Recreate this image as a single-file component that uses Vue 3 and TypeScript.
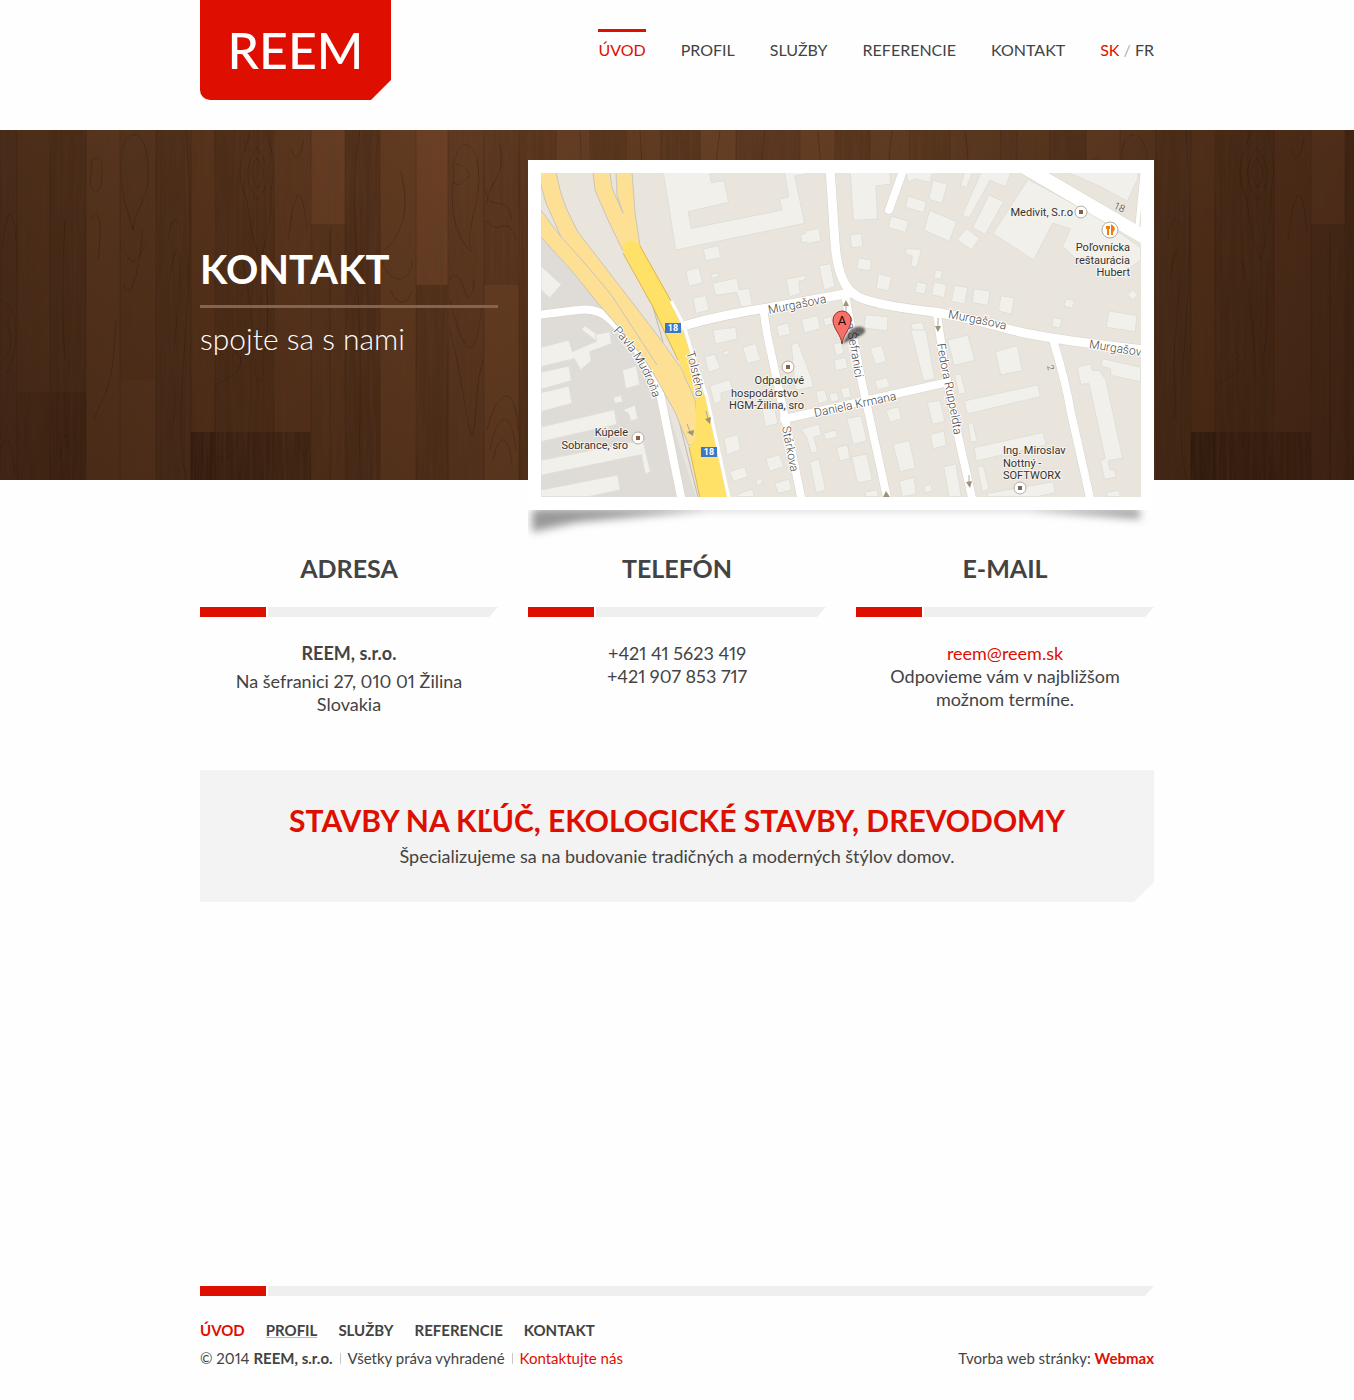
<script setup lang="ts">
interface NavItem {
  label: string
  href: string
}

interface ShapeGroup {
  x: number
  y: number
  shapes: string[]
}

interface Place {
  lines: string[]
  x: number
  y: number
  anchor: 'start' | 'end'
}

const nav: NavItem[] = [
  { label: 'ÚVOD', href: '#uvod' },
  { label: 'PROFIL', href: '#profil' },
  { label: 'SLUŽBY', href: '#sluzby' },
  { label: 'REFERENCIE', href: '#referencie' },
  { label: 'KONTAKT', href: '#kontakt' },
]

// Floor boards of one 1000px tile: [x, y, width, height, colour]
const boards: [number, number, number, number, string][] = [
  [0, 0, 17, 350, '#5a3720'],
  [17, 0, 33, 262, '#5e3a20'], [17, 262, 33, 88, '#56331b'],
  [50, 0, 36, 262, '#57351d'], [50, 262, 36, 88, '#4e2e18'],
  [86, 0, 34, 350, '#673f24'],
  [120, 0, 36, 250, '#603b21'], [120, 250, 36, 100, '#673f24'],
  [156, 0, 35, 350, '#57351d'],
  [191, 0, 24, 302, '#61391e'], [191, 302, 24, 48, '#402513'],
  [215, 0, 59, 302, '#56331b'], [215, 302, 59, 48, '#462915'],
  [274, 0, 37, 302, '#61391f'], [274, 302, 37, 48, '#4c2c17'],
  [311, 0, 34, 94, '#6d4125'], [311, 94, 34, 256, '#5c371e'],
  [345, 0, 35, 350, '#53311b'],
  [380, 0, 36, 350, '#643c21'],
  [416, 0, 32, 155, '#6d4125'], [416, 155, 32, 195, '#57341c'],
  [448, 0, 36, 350, '#5e3820'],
  [484, 0, 35, 155, '#5a361f'], [484, 155, 35, 195, '#683f23'],
  [519, 0, 37, 350, '#58341b'],
  [556, 0, 34, 350, '#633c22'],
  [590, 0, 36, 350, '#57341b'],
  [626, 0, 35, 350, '#603a20'],
  [661, 0, 39, 350, '#57341c'],
  [700, 0, 36, 350, '#653e24'],
  [736, 0, 64, 350, '#5a3620'],
  [800, 0, 35, 350, '#633c22'],
  [835, 0, 35, 350, '#56341c'],
  [870, 0, 40, 350, '#5f3a22'],
  [910, 0, 40, 350, '#58361c'],
  [950, 0, 50, 350, '#5d3920'],
]

// Grain contours within the same tile
const grain: string[] = [
  'M257 18C245 35 244 52 258 70C271 54 270 36 257 18Z',
  'M257 28C250 38 250 47 258 58C265 47 264 38 257 28Z',
  'M250 0C248 20 232 35 245 65C251 82 247 98 261 130C268 98 273 82 271 60C278 30 268 15 268 0',
  'M242 130C250 160 256 220 255 245C260 260 266 245 262 230C273 190 263 165 270 130',
  'M292 20Q298 40 304 8M288 110Q299 25 307 100',
  'M122 20C128 -5 148 0 148 40C150 70 136 75 133 100C126 75 118 60 122 20Z',
  'M125 120Q132 145 145 115M123 155Q134 180 143 100',
  'M454 45C450 20 470 0 477 30C485 70 465 90 471 122C455 105 449 80 454 45Z',
  'M455 35C460 32 467 38 470 45C464 52 459 58 453 52',
  'M450 150C462 125 468 200 474 150M450 170C464 225 475 240 482 175M450 200C465 260 467 300 472 305C478 290 474 260 483 230',
  'M490 320C495 290 510 270 516 320M493 330C498 305 508 300 512 335M487 300C496 260 516 250 518 300',
  'M486 60C488 85 507 60 512 90M486 90C500 110 506 80 516 110M500 15C506 50 488 50 487 75',
  'M2 120C8 60 15 90 16 110M0 170C20 175 20 220 6 245M5 190Q18 215 3 230M0 320Q10 290 15 345',
  'M168 110Q172 80 180 95M170 150C176 100 184 110 176 200C171 240 178 270 174 290',
  'M385 120C405 100 410 75 400 40M382 130C390 160 414 150 412 130M390 160Q402 185 413 160',
  'M92 30Q106 20 101 55Q96 70 90 55ZM90 90Q105 70 98 130M94 290C104 260 112 270 116 190',
  'M215 255C240 245 248 230 234 220M217 325Q230 338 240 305M298 305Q305 345 309 305',
  'M580 0Q586 90 575 180T580 350M640 0Q648 110 638 200T640 350M720 0Q706 100 717 230V350',
  'M60 330Q66 285 69 320M65 90Q60 170 65 230M186 0Q194 100 185 210T187 350M330 100V350M360 0C345 80 367 160 358 350',
  'M765 0Q752 95 766 180T760 350M818 0Q828 100 814 190T820 350M892 0Q880 95 893 210T890 350M965 0Q980 120 965 350',
]

// Each group of footprints is drawn at a third of its own units from (x, y)
const buildings: ShapeGroup[] = [
  {
    x: 528, y: 160, shapes: [
      '405,30 543,30 550,68 588,62 602,127 480,155 490,205 762,150 755,118 782,110 768,30 840,30 836,42 800,48 830,190 443,270',
      '525,267 572,257 578,293 533,302', '473,333 512,322 525,368 483,379',
      '548,344 568,338 572,349 552,355', '553,370 627,354 634,390 664,384 673,437 640,441 626,397 563,406',
      '495,414 533,406 544,451 503,460', '818,224 833,220 831,213 873,205 879,242 838,251 836,246 820,248',
      '774,358 832,346 834,358 812,364 817,400 785,410', '873,318 907,311 921,380 888,390',
      '820,478 868,466 877,506 830,519', '745,498 780,488 788,523 753,530', '886,475 910,469 914,492 890,498',
      '555,519 622,505 630,540 560,540', '39,318 100,374 65,413 39,390', '160,508 172,498 211,526 200,539',
    ],
  },
  {
    x: 834, y: 160, shapes: [
      '48,30 168,30 170,73 126,77 131,177 58,181', '212,30 297,30 288,68 245,57 223,66',
      '297,61 340,73 325,130 284,118', '222,108 277,125 269,158 214,142', '171,168 224,184 214,218 163,202',
      '287,151 368,185 346,244 270,211', '394,30 418,30 398,83 379,76', '444,30 535,30 514,80 468,61 405,175 385,165',
      '465,105 509,125 453,224 416,202', '397,205 437,235 413,269 369,240',
      '582,58 728,137 790,171 920,263 920,300 840,360 775,300 745,313 686,260 710,206 656,190 599,300 477,221',
      '685,30 912,30 912,55 880,124 800,80', '48,224 82,220 87,260 53,263', '74,294 113,300 108,333 68,326',
      '215,266 263,268 248,322 231,318 235,288 215,281', '133,340 173,352 164,393 127,385',
      '305,329 326,334 321,358 299,353', '250,365 279,372 272,403 242,396', '300,365 338,374 331,413 293,404',
      '362,376 401,383 392,433 352,424', '420,386 468,393 462,436 414,428', '501,407 541,414 532,463 493,453',
      '697,416 722,423 715,445 690,438', '897,389 912,405 896,419 880,404', '824,453 909,466 904,515 817,502',
      '95,464 162,470 160,513 90,504', '658,472 683,478 678,504 653,499', '231,492 265,486 280,540 243,540',
      '337,540 403,528 410,540',
    ],
  },
  {
    x: 528, y: 330, shapes: [
      '39,52 123,30 133,65 205,34 202,14 246,5 250,41 185,65 190,92 158,120 139,86 39,110',
      '39,127 123,108 130,152 39,178', '39,188 123,168 132,220 39,245', '283,120 325,108 335,164 293,176',
      '39,291 259,239 267,283 39,335', '39,391 345,330 367,425 352,433 340,374 39,436', '39,480 269,435 277,480 180,500 39,500',
      '283,241 321,225 329,266 309,274 301,249', '257,201 279,196 284,216 260,220',
      '644,52 683,40 698,90 658,101', '555,0 623,-8 628,27 562,42', '530,80 560,72 577,115 542,127',
      '545,168 604,148 615,180 579,189 580,213 559,222', '585,65 604,60 607,70 589,76', '790,44 810,37 830,90 852,150 858,170 802,180',
      '588,325 629,312 638,360 596,375', '605,425 650,410 660,440 616,454', '630,492 673,477 680,500 632,500',
      '700,225 735,215 750,280 712,290', '713,386 754,374 768,410 725,424', '740,460 783,447 791,480 750,490',
      '820,298 872,282 880,315 858,321 869,366 850,370 837,325', '845,397 873,387 893,480 865,489', '683,452 700,445 705,460 688,466',
      '886,310 922,300 929,322 893,329', '863,184 890,179 900,212 872,222', '917,92 950,83 958,113 926,120', '916,42 940,36 948,69 924,77',
      '927,350 960,344 970,385 935,390', '903,192 928,186 933,211 909,216',
    ],
  },
  {
    x: 834, y: 330, shapes: [
      '230,0 276,0 302,145 269,154', '341,30 402,15 422,91 360,106', '484,65 550,46 565,122 500,135',
      '108,55 143,46 158,94 124,104', '122,154 158,141 168,170 131,181', '390,213 612,164 619,200 400,252',
      '362,135 380,131 395,188 374,193', '279,217 318,211 333,274 296,283', '156,240 193,230 203,266 167,277',
      '38,265 82,258 98,332 58,344', '289,313 330,303 337,346 297,357', '402,282 416,277 430,334 411,337',
      '420,353 628,307 636,345 427,393', '177,343 226,332 244,413 198,426', '53,381 98,372 115,449 71,460',
      '7,353 40,344 48,386 18,393', '329,410 366,401 382,500 345,500', '430,412 448,407 465,476 445,486',
      '195,454 240,442 247,492 205,500', '93,486 130,479 133,500 95,500', '269,469 291,463 296,483 275,489',
      '460,490 658,455 664,488 610,500 460,500', '730,111 770,102 775,121 795,121 815,148 866,384 823,393 827,419 842,421 846,441 812,448 799,392 814,386 765,161 740,163',
      '806,86 920,112 920,156 830,136 830,116 800,108', '815,488 854,481 860,500 820,500', '19,176 44,170 52,199 28,207', '0,90 34,82 42,113 5,122',
    ],
  },
]

const roads: { d: string; w: number }[] = [
  { d: 'M536 315L578 310Q598 307 612 321C640 350 653 370 660 393L682 502', w: 8 },
  { d: 'M683 326Q725 314 768 308L850 293', w: 9 },
  { d: 'M830 168L835 243Q838 283 854 294Q865 304 934 312Q960 316 1001 327Q1035 338 1146 350', w: 9 },
  { d: 'M1026 168L1146 238', w: 14 },
  { d: 'M1143 168L1137 230', w: 4 },
  { d: 'M904 168L889 210', w: 8 },
  { d: 'M764 314L767 334L785 418L802 502', w: 8 },
  { d: 'M846 300L862 383L888 502', w: 8 },
  { d: 'M784 419L944 383', w: 8 },
  { d: 'M937 314L945 370L959 440L973 502', w: 8 },
  { d: 'M1054 343Q1066 383 1071 413L1091 502', w: 8 },
]

const places: Place[] = [
  { lines: ['Medivit, S.r.o'], x: 1073, y: 216, anchor: 'end' },
  { lines: ['Poľovnícka', 'reštaurácia', 'Hubert'], x: 1130, y: 251, anchor: 'end' },
  { lines: ['Odpadové', 'hospodárstvo -', 'HGM-Žilina, sro'], x: 804, y: 384, anchor: 'end' },
  { lines: ['Kúpele', 'Sobrance, sro'], x: 628, y: 436, anchor: 'end' },
  { lines: ['Ing. Miroslav', 'Nottný -', 'SOFTWORX'], x: 1003, y: 454, anchor: 'start' },
]

const dots: [number, number, string][] = [
  [1081, 212, '#8c5f43'],
  [788, 367, '#8c5f43'],
  [638, 438, '#8c5f43'],
  [1020, 488, '#77675f'],
]

const streets: { id: string; d: string; name: string }[] = [
  { id: 'street-1', d: 'M769 314L850 298', name: 'Murgašova' },
  { id: 'street-2', d: 'M948 318Q978 323 1020 333', name: 'Murgašova' },
  { id: 'street-3', d: 'M1089 348Q1115 352 1160 359', name: 'Murgašova' },
  { id: 'street-4', d: 'M815 417L915 396', name: 'Daniela Krmana' },
  { id: 'street-5', d: 'M613 331C630 349 646 372 655 405', name: 'Pavla Mudroňa' },
  { id: 'street-6', d: 'M686 353Q693 372 698 410', name: 'Tolstého' },
  { id: 'street-7', d: 'M782 427L794 490', name: 'Stárkova' },
  { id: 'street-8', d: 'M845 317L859 400', name: 'na Šefranici' },
  { id: 'street-9', d: 'M937 344C942 380 950 400 956 450', name: 'Fedora Ruppeldta' },
]
</script>

<template>
  <div class="page">
    <header class="wrap header">
      <a class="logo" href="#uvod">REEM</a>
      <nav class="main-nav" aria-label="Hlavné menu">
        <a
          v-for="(item, i) in nav"
          :key="item.href"
          :href="item.href"
          :class="{ active: i === 0 }"
        >{{ item.label }}</a>
        <span class="langs"><a class="current" href="#sk">SK</a> <span class="slash">/</span> <a href="#fr">FR</a></span>
      </nav>
    </header>

    <section class="hero">
      <svg class="wood" aria-hidden="true">
        <defs>
          <pattern id="boards" width="1000" height="350" patternUnits="userSpaceOnUse">
            <rect
              v-for="(b, i) in boards"
              :key="i"
              :x="b[0]"
              :y="b[1]"
              :width="b[2]"
              :height="b[3]"
              :fill="b[4]"
            />
            <path
              v-for="b in boards"
              :key="'e' + b[0] + b[1]"
              :d="`M${b[0]} ${b[1]}v${b[3]}`"
              stroke="#2a1509"
              stroke-opacity=".3"
            />
            <g fill="none" stroke="#2b1508" stroke-opacity=".38">
              <path v-for="(g, i) in grain" :key="'g' + i" :d="g" />
            </g>
          </pattern>
          <filter id="fibre" x="0" y="0" width="100%" height="100%">
            <feTurbulence type="fractalNoise" baseFrequency=".3 .012" numOctaves="4" seed="8" />
            <feColorMatrix values="0 0 0 0 .12  0 0 0 0 .05  0 0 0 0 .02  1.1 0 0 0 -.42" />
          </filter>
          <linearGradient id="shade-x">
            <stop offset="0" stop-color="#1e0e06" stop-opacity=".3" />
            <stop offset=".35" stop-color="#1e0e06" stop-opacity="0" />
            <stop offset=".65" stop-color="#1e0e06" stop-opacity="0" />
            <stop offset="1" stop-color="#1e0e06" stop-opacity=".4" />
          </linearGradient>
          <linearGradient id="shade-y" x2="0" y2="1">
            <stop offset="0" stop-color="#1e0e06" stop-opacity="0" />
            <stop offset="1" stop-color="#1e0e06" stop-opacity=".22" />
          </linearGradient>
        </defs>
        <rect width="100%" height="100%" fill="url(#boards)" />
        <rect width="100%" height="100%" filter="url(#fibre)" />
        <rect width="100%" height="100%" fill="url(#shade-x)" />
        <rect width="100%" height="100%" fill="url(#shade-y)" />
      </svg>

      <div class="wrap">
        <div class="hero-row">
          <div class="hero-text">
            <h1>KONTAKT</h1>
            <p>spojte sa s nami</p>
          </div>
          <div class="map-card">
            <svg class="card-shadow" viewBox="0 0 626 50" aria-hidden="true">
              <polygon points="4,0 4,22 50,12 180,0" fill="#000" fill-opacity=".4" />
              <polygon points="500,0 612,9 612,0" fill="#000" fill-opacity=".38" />
              <rect x="10" y="-4" width="600" height="4" fill="#000" fill-opacity=".25" />
            </svg>
            <svg class="map" viewBox="541 173 600 324" role="img" aria-label="Mapa">
              <rect x="541" y="173" width="600" height="324" fill="#e9e5dd" />
              <polygon points="541,236 625,334 660,385 697,500 541,500" fill="#dfdbd6" />
              <g
                v-for="g in buildings"
                :key="g.x + '-' + g.y"
                :transform="`translate(${g.x} ${g.y}) scale(.33333)`"
                fill="#f1f0ea"
                stroke="#dfdfd9"
                stroke-width="3"
              >
                <polygon v-for="s in g.shapes" :key="s" :points="s" />
              </g>

              <g fill="none" stroke-linecap="round" stroke-linejoin="round">
                <path v-for="r in roads" :key="'o' + r.d" :d="r.d" stroke="#d8d3c9" :stroke-width="r.w + 1" />
                <path v-for="r in roads" :key="r.d" :d="r.d" stroke="#fff" :stroke-width="r.w" />
              </g>

              <g stroke="#c9c5ba">
                <path d="M675 405L698 497M653 307L663 342" fill="none" stroke="#bbb9b5" />
                <path
                  d="M540 172H556C560 190 561 200 578 232L628 297L661 340L681 368L695 400L700 440L689 446L675 412L656 378Q640 350 601 307L571 270L540 236Z"
                  fill="#fee095"
                />
                <path d="M540 182L546 203L561 237L540 209Z" fill="#e9e5dd" />
                <path d="M561 237Q590 268 612 296L657 365" fill="none" />
                <path d="M593 172L595 190L608 220L623 251L640 246L635 213L632 172Z" fill="#fee095" />
                <path d="M610 172L612 188L623 213L617 195L616 172Z" fill="#e9e5dd" />
              </g>
              <path
                d="M623 251C620 239 637 238 640 246L671 300L686 340L705 397L727 498H700L689 447L695 440L696 400L678 360L666 335L653 307Z"
                fill="#ffe168"
              />
              <path d="M623 253L653 307L666 335L678 360M640 246L671 301M689 447L700 498" fill="none" stroke="#dcb546" />
              <path d="M671 301L684 325L691 350L707 397L729 498" fill="none" stroke="#fff" stroke-width="3" />
              <path
                d="M687 424L691 434M706 411L709 422M846 314V303M938 318V330M969 475V486"
                fill="none"
                stroke="#aaa"
              />
              <g fill="#9c9474">
                <path d="M687 432L694 430L693 436ZM705 419L711 417L710 424Z" />
                <path d="M843 306L846 300L849 306ZM935 326H941L938 332ZM966 482L972 481L970 488ZM883 497L886 491L890 497Z" />
              </g>

              <g v-for="y in [328, 452]" :key="y">
                <rect :x="y === 328 ? 665 : 701" :y="y - 5" width="16" height="10" fill="#3d78c8" />
                <text class="shield" :x="y === 328 ? 673 : 709" :y="y + 3">18</text>
              </g>

              <g class="street">
                <template v-for="s in streets" :key="s.id">
                  <path :id="s.id" :d="s.d" fill="none" stroke="none" />
                  <text><textPath :href="'#' + s.id">{{ s.name }}</textPath></text>
                </template>
                <text class="num" transform="translate(1113 208) rotate(25)">18</text>
                <text class="num tiny" transform="translate(1047 366) rotate(75)">2</text>
              </g>

              <g v-for="d in dots" :key="d[0]">
                <circle :cx="d[0]" :cy="d[1]" r="6" fill="#fff" stroke="#b5aca4" />
                <rect :x="d[0] - 2" :y="d[1] - 2" width="4" height="4" :fill="d[2]" />
              </g>
              <circle cx="1110" cy="230" r="8" fill="#fff" stroke="#b5aca4" />
              <path
                d="M1107 226V229M1109 226V229M1108 229V235M1112 235V226Q1115 228 1113 231"
                fill="none"
                stroke="#ef7d0a"
                stroke-width="2"
              />

              <g class="place">
                <text v-for="p in places" :key="p.lines[0]" :text-anchor="p.anchor">
                  <tspan v-for="(line, i) in p.lines" :key="line" :x="p.x" :y="p.y + i * 12.5">{{ line }}</tspan>
                </text>
              </g>

              <path class="pin-shadow" d="M842 344L850 330C856 325 866 326 865 331C864 336 854 338 842 344Z" />
              <path
                d="M842 344C841 334 833 329 833 320A9 9 0 0 1 851 320C851 329 843 334 842 344Z"
                fill="#f8706a"
                stroke="#9b302c"
              />
              <text class="pin-letter" x="842" y="325">A</text>
            </svg>
          </div>
        </div>
      </div>
    </section>

    <main class="wrap">
      <div class="columns">
        <section>
          <h2>ADRESA</h2>
          <div class="rule"></div>
          <p class="company"><strong>REEM, s.r.o.</strong></p>
          <p>Na šefranici 27, 010 01 Žilina<br>Slovakia</p>
        </section>
        <section>
          <h2>TELEFÓN</h2>
          <div class="rule"></div>
          <p>+421 41 5623 419<br>+421 907 853 717</p>
        </section>
        <section>
          <h2>E-MAIL</h2>
          <div class="rule"></div>
          <p><a class="red" href="mailto:reem@reem.sk">reem@reem.sk</a><br>Odpovieme vám v najbližšom<br>možnom termíne.</p>
        </section>
      </div>

      <section class="banner">
        <h2>STAVBY NA KĽÚČ, EKOLOGICKÉ STAVBY, DREVODOMY</h2>
        <p>Špecializujeme sa na budovanie tradičných a moderných štýlov domov.</p>
      </section>
    </main>

    <footer class="wrap footer">
      <div class="rule"></div>
      <nav class="foot-nav" aria-label="Menu v pätičke">
        <a
          v-for="(item, i) in nav"
          :key="item.href"
          :href="item.href"
          :class="{ active: i === 0, hovered: i === 1 }"
        >{{ item.label }}</a>
      </nav>
      <div class="legal">
        <span>© 2014 <strong>REEM, s.r.o.</strong></span>
        <span class="sep"></span>
        <span>Všetky práva vyhradené</span>
        <span class="sep"></span>
        <a class="red" href="#kontakt">Kontaktujte nás</a>
        <span class="author">Tvorba web stránky: <a class="red" href="#webmax"><strong>Webmax</strong></a></span>
      </div>
    </footer>
  </div>
</template>

<style>
body {
  margin: 0;
  background: #fefefe;
}
</style>

<style scoped>
.page {
  display: flex;
  flex-direction: column;
  min-height: 100vh;
  color: #434343;
  font: 18px/23px Lato, "Open Sans", sans-serif;
  font-variant-numeric: proportional-nums;
}

h1,
h2,
p {
  margin: 0;
}

a {
  color: inherit;
  text-decoration: none;
}

.wrap {
  box-sizing: border-box;
  width: 100%;
  max-width: 994px;
  margin: 0 auto;
  padding: 0 20px;
}

.red {
  color: #de0f00;
}

.header {
  display: flex;
  justify-content: space-between;
  align-items: flex-start;
  min-height: 130px;
}

.logo {
  box-sizing: border-box;
  width: 191px;
  height: 100px;
  background: #de0f00;
  border-bottom-left-radius: 10px;
  clip-path: polygon(0 0, 100% 0, 100% 80px, calc(100% - 20px) 100%, 0 100%);
  color: #fff;
  font-size: 50px;
  font-weight: 500;
  line-height: 100px;
  text-align: center;
}

.main-nav {
  display: flex;
  gap: 35px;
  padding-top: 29px;
  font-size: 16px;
}

.main-nav > * {
  padding-top: 6px;
  border-top: 3px solid transparent;
}

.main-nav .active {
  border-color: #de0f00;
  color: #de0f00;
}

.current {
  color: #de0f00;
}

.slash {
  color: #b0b0b0;
}

.hero {
  position: relative;
  margin-bottom: 30px;
  background: #4f2f1a;
}

.wood {
  position: absolute;
  inset: 0;
  width: 100%;
  height: 100%;
}

.hero-row {
  position: relative;
  z-index: 0;
  display: grid;
  grid-template-columns: repeat(3, 1fr);
  gap: 30px;
  padding-top: 30px;
}

.hero-text {
  padding-top: 84px;
  color: #fff;
}

.hero-text h1 {
  padding-bottom: 11px;
  border-bottom: 3px solid #82644f;
  font-size: 40px;
  line-height: 50px;
}

.hero-text p {
  padding-top: 10px;
  font-size: 30px;
  font-weight: 300;
  line-height: 40px;
}

.map-card {
  position: relative;
  grid-column: span 2;
  margin-bottom: -30px;
  padding: 13px;
  background: #fff;
}

.map {
  display: block;
  width: 100%;
}

.card-shadow {
  position: absolute;
  z-index: -1;
  top: 100%;
  left: 0;
  width: 100%;
  overflow: visible;
  clip-path: inset(0 -10px -20px 0);
}

.card-shadow > * {
  filter: blur(4px);
}

.place {
  fill: #37322d;
  font: 11px Roboto, sans-serif;
  paint-order: stroke;
  stroke: #f6f4f0;
  stroke-width: 2px;
}

.street {
  fill: #45423e;
  font: 300 12px Roboto, sans-serif;
  paint-order: stroke;
  stroke: #fff;
  stroke-width: 2px;
}

.num {
  font-size: 10px;
  stroke: none;
}

.tiny {
  font-size: 9px;
}

.shield {
  fill: #fff;
  font: bold 9px Roboto, sans-serif;
  text-anchor: middle;
}

.pin-shadow {
  fill: #000;
  fill-opacity: 0.55;
  filter: blur(1px);
}

.pin-letter {
  fill: #1c0504;
  font: 13px Roboto, sans-serif;
  text-anchor: middle;
}

.columns {
  display: grid;
  grid-template-columns: repeat(3, 1fr);
  gap: 30px;
  padding-top: 43px;
  text-align: center;
}

.columns h2 {
  font-size: 25px;
  line-height: 30px;
}

.rule {
  display: flex;
  gap: 2px;
  height: 10px;
}

.rule::before {
  content: "";
  width: 66px;
  background: #de0f00;
}

.rule::after {
  content: "";
  flex: 1;
  background: #efefef;
  clip-path: polygon(0 0, 100% 0, calc(100% - 9px) 100%, 0 100%);
}

.columns .rule {
  margin: 24px 0 25px;
}

.columns .company {
  margin-bottom: 5px;
}

.banner {
  margin-top: 54px;
  padding: 30px 20px 34px;
  background: #f3f3f3;
  clip-path: polygon(0 0, 100% 0, 100% calc(100% - 20px), calc(100% - 20px) 100%, 0 100%);
  text-align: center;
}

.banner h2 {
  margin-bottom: 5px;
  color: #de0f00;
  font-size: 30px;
  line-height: 40px;
}

.footer {
  margin-top: auto;
  padding-bottom: 32px;
  font-size: 15px;
  line-height: 20px;
}

.foot-nav {
  display: flex;
  gap: 21px;
  margin: 24px 0 8px;
  font-weight: bold;
}

.foot-nav .active {
  color: #de0f00;
}

.hovered {
  height: 17px;
  border-bottom: 1px solid #bdbdbd;
}

.legal {
  display: flex;
  align-items: center;
  gap: 7px;
}

.sep {
  width: 1px;
  height: 11px;
  background: #c8c8c8;
}

.author {
  margin-left: auto;
}
</style>
